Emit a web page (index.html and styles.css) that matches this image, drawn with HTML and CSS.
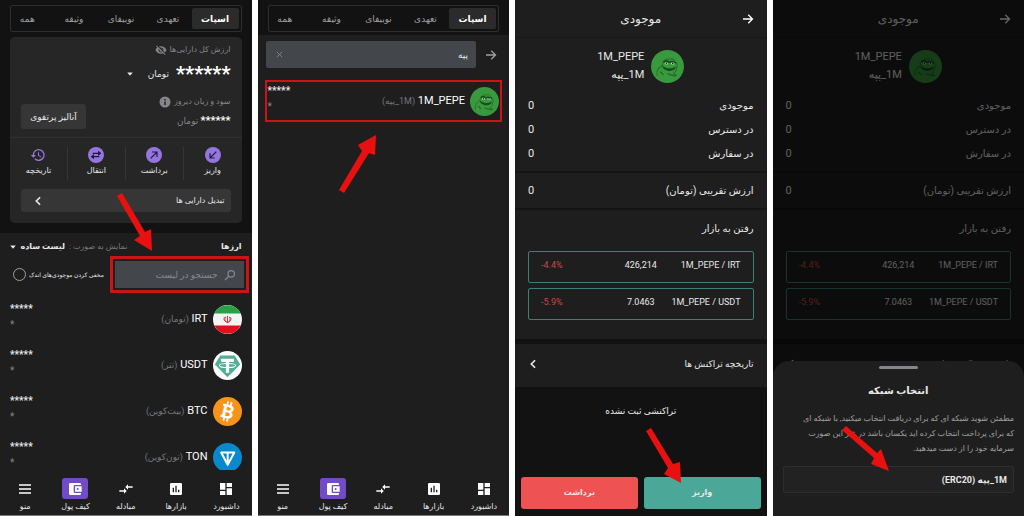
FILE: index.html
```html
<!DOCTYPE html>
<html lang="fa" dir="rtl">
<head>
  <meta charset="UTF-8" />
  <meta name="viewport" content="width=device-width, initial-scale=1.0" />
  <title>آموزش واریز پپه</title>
  <link rel="stylesheet" href="styles.css">
</head>

<body>
  <svg class="sprite" aria-hidden="true">
    <symbol id="i-dashboard" viewBox="0 0 24 24"><path d="M13 3h8v6h-8zM13 11h8v10h-8zM3 3h8v10H3zM3 15h8v6H3z" /></symbol>
    <symbol id="i-chart" viewBox="0 0 24 24"><path fill-rule="evenodd" d="M5 3h14a2 2 0 0 1 2 2v14a2 2 0 0 1-2 2H5a2 2 0 0 1-2-2V5a2 2 0 0 1 2-2zM7 10v7h2v-7zM11 7v10h2V7zM15 13v4h2v-4z" /></symbol>
    <symbol id="i-swap" viewBox="0 0 24 24"><path d="M9 14H2v2h7v3l4-4-4-4zM15 13v-3h7V8h-7V5l-4 4z" /></symbol>
    <symbol id="i-wallet" viewBox="0 0 24 24"><path d="M21 18v1a2 2 0 0 1-2 2H5a2 2 0 0 1-2-2V5a2 2 0 0 1 2-2h14a2 2 0 0 1 2 2v1h-9a2 2 0 0 0-2 2v8a2 2 0 0 0 2 2zm-9-2h10V8H12zm4-2.500a1.500 1.500 0 1 1 0-3 1.500 1.500 0 0 1 0 3z" /></symbol>
    <symbol id="i-menu" viewBox="0 0 24 24"><path d="M3 5h18v2H3zM3 11h18v2H3zM3 17h18v2H3z" /></symbol>
    <symbol id="i-eye-off" viewBox="0 0 24 24"><path d="M12 7c2.760 0 5 2.240 5 5 0 .650-.130 1.260-.360 1.830l2.920 2.920c1.510-1.260 2.700-2.890 3.430-4.750-1.730-4.390-6-7.500-11-7.500-1.400 0-2.740.250-3.980.700l2.160 2.160C10.740 7.130 11.350 7 12 7zM2 4.270l2.280 2.280.460.460C3.080 8.300 1.780 10.020 1 12c1.730 4.390 6 7.500 11 7.500 1.550 0 3.030-.300 4.380-.840L19.730 22 21 20.730 3.270 3zM7.530 9.800l1.550 1.550c-.050.210-.080.430-.080.650 0 1.660 1.340 3 3 3 .220 0 .440-.030.650-.080l1.550 1.550c-.670.330-1.410.530-2.200.530-2.760 0-5-2.240-5-5 0-.790.200-1.530.530-2.200zm4.310-.780l3.150 3.150.020-.160c0-1.660-1.340-3-3-3z" /></symbol>
    <symbol id="i-info" viewBox="0 0 24 24"><path fill-rule="evenodd" d="M12 1a11 11 0 1 0 0 22 11 11 0 0 0 0-22zm-1.500 5h3v3h-3zm0 5h3v7h-3z" /></symbol>
    <symbol id="i-deposit" viewBox="0 0 24 24"><circle cx="12" cy="12" r="12" fill="#9575de" /><path d="M17 7L7.500 16.500M7.500 9.500v7h7" fill="none" stroke="#221a3c" stroke-width="1.800" /></symbol>
    <symbol id="i-withdraw" viewBox="0 0 24 24"><circle cx="12" cy="12" r="12" fill="#9575de" /><path d="M7 17l9.500-9.500M9 7.500h7.500V15" fill="none" stroke="#221a3c" stroke-width="1.800" /></symbol>
    <symbol id="i-transfer" viewBox="0 0 24 24"><circle cx="12" cy="12" r="12" fill="#9575de" /><path d="M7 8.500h8V5.500l5 4-5 4v-3H7zM17 13.500H9v-3l-5 4 5 4v-3h8z" fill="#221a3c" /></symbol>
    <symbol id="i-history" viewBox="0 0 24 24"><path d="M13 3a9 9 0 0 0-9 9H1l4 4 4-4H6a7 7 0 1 1 2.060 4.940l-1.420 1.420A9 9 0 1 0 13 3zm-1 5v5l4.300 2.500.700-1.200-3.500-2.100V8z" fill="#9575de" /></symbol>
    <symbol id="i-search" viewBox="0 0 24 24"><path d="M14.500 3a6.500 6.500 0 1 1 0 13 6.500 6.500 0 0 1 0-13zM9.500 14.500L2 22" fill="none" stroke="currentColor" stroke-width="2.500" /></symbol>
    <symbol id="i-arrow" viewBox="0 0 24 24"><path d="M2 12h19M12.500 3.500L21 12l-8.500 8.500" fill="none" stroke="currentColor" stroke-width="2.600" /></symbol>
    <symbol id="i-chevron" viewBox="0 0 24 24"><path d="M17 3l-9 9 9 9" fill="none" stroke="currentColor" stroke-width="4" /></symbol>
    <symbol id="i-caret" viewBox="0 0 24 24"><path d="M1 6h22L12 19z" /></symbol>
    <symbol id="i-close" viewBox="0 0 24 24"><path d="M3 3l18 18M21 3L3 21" fill="none" stroke="currentColor" stroke-width="3" /></symbol>

    <symbol id="c-pepe" viewBox="0 0 32 32">
      <circle cx="16" cy="16" r="16" fill="#389a3c" />
      <path d="M6 25c-1-5 1-8 5-10 0-4 3-7 6-6 2-1 5-1 6 2 2 1 3 4 2 6 0 3-2 5-3 6l2 3" fill="none" stroke="#23702a" stroke-width="1" />
      <path d="M11 15c3 3 8 4 13 1 0 3-4 5-8 4-3-1-5-2-5-5z" fill="#174d20" />
      <path d="M12 12c2-2 4-2 5 0 2-1 5-1 7 1" fill="none" stroke="#174d20" stroke-width="1.600" />
      <ellipse cx="15" cy="13" rx="1.800" ry="1" fill="#d9ead2" /><ellipse cx="21" cy="13" rx="1.800" ry="1" fill="#d9ead2" />
      <circle cx="15" cy="13" r=".8" fill="#10240f" /><circle cx="21" cy="13" r=".8" fill="#10240f" />
      <path d="M16 23l6 2 3-1M9 21l3 3" fill="none" stroke="#23702a" stroke-width="1.500" />
    </symbol>
    <symbol id="c-irt" viewBox="0 0 32 32">
      <circle cx="16" cy="16" r="16" fill="#f4f4f4" />
      <path d="M1.500 9.500a16 16 0 0 1 29 0z" fill="#27a048" />
      <path d="M1.500 22.500a16 16 0 0 0 29 0z" fill="#e0101c" />
      <path d="M16 12v8M14 13c-1.500 2-1 5 1 6M18 13c1.500 2 1 5-1 6M12.700 13.500c-1.500 2.500 0 5 3.300 5.500M19.300 13.500c1.500 2.500 0 5-3.300 5.500" fill="none" stroke="#d8232e" stroke-width="1" />
    </symbol>
    <symbol id="c-usdt" viewBox="0 0 32 32">
      <circle cx="16" cy="16" r="16" fill="#fff" />
      <path d="M8 5h16l6 10-14 14L2 15z" fill="#50af95" />
      <path d="M9 8.500h14v3.500h-5.200v12h-3.600V12H9z" fill="#fff" />
      <ellipse cx="16" cy="16" rx="9" ry="2.200" fill="none" stroke="#fff" stroke-width="1.200" />
    </symbol>
    <symbol id="c-ton" viewBox="0 0 32 32">
      <circle cx="16" cy="16" r="16" fill="#0a88cc" />
      <path d="M9 10.500h14.500L16.200 24zM16.200 10.500V23" fill="none" stroke="#fff" stroke-width="2.200" stroke-linejoin="round" />
    </symbol>
  </svg>

  <main class="steps">

    <!-- کیف پول -->
    <section class="screen">
      <div class="tabs-bar">
        <div class="tabs">
          <button class="tab active">اسپات</button>
          <button class="tab">تعهدی</button>
          <button class="tab">نوبیفای</button>
          <button class="tab">وثیقه</button>
          <button class="tab">همه</button>
        </div>
      </div>

      <div class="summary-wrap">
        <div class="summary">
          <div class="summary-label">ارزش کل دارایی‌ها <svg class="icon-md"><use href="#i-eye-off" /></svg></div>
          <div class="total">
            <span class="total-stars">******</span>
            <div class="picker currency">
              <select aria-label="واحد"><option>تومان</option></select>
              <svg class="caret"><use href="#i-caret" /></svg>
            </div>
          </div>
          <div class="profit">
            <div>
              <div class="summary-label">سود و زیان دیروز <svg class="icon-md"><use href="#i-info" /></svg></div>
              <div class="profit-value"><span class="profit-stars">******</span> تومان</div>
            </div>
            <button class="btn-dark">آنالیز پرتفوی</button>
          </div>
          <div class="actions">
            <button class="action"><svg><use href="#i-deposit" /></svg>واریز</button>
            <button class="action"><svg><use href="#i-withdraw" /></svg>برداشت</button>
            <button class="action"><svg><use href="#i-transfer" /></svg>انتقال</button>
            <button class="action"><svg><use href="#i-history" /></svg>تاریخچه</button>
          </div>
          <button class="convert">تبدیل دارایی ها <svg class="chevron"><use href="#i-chevron" /></svg></button>
        </div>
      </div>

      <div class="coins">
        <div class="coins-head">
          <h2>ارزها</h2>
          <div class="picker view">
            <label for="view">نمایش به صورت :</label>
            <select id="view"><option>لیست ساده</option></select>
            <svg class="caret"><use href="#i-caret" /></svg>
          </div>
        </div>
        <div class="filter">
          <div class="search highlight">
            <svg class="icon-md"><use href="#i-search" /></svg>
            <input type="text" placeholder="جستجو در لیست" aria-label="جستجو در لیست">
          </div>
          <label class="hide-small">مخفی کردن موجودی‌های اندک <input type="checkbox"></label>
        </div>
        <div class="coin">
          <svg class="coin-icon"><use href="#c-irt" /></svg>
          <div class="coin-name">IRT <span>(تومان)</span></div>
          <div class="coin-value">*****<small>*</small></div>
        </div>
        <div class="coin">
          <svg class="coin-icon"><use href="#c-usdt" /></svg>
          <div class="coin-name">USDT <span>(تتر)</span></div>
          <div class="coin-value">*****<small>*</small></div>
        </div>
        <div class="coin">
          <svg class="coin-icon" viewBox="0 0 32 32">
            <circle cx="16" cy="16" r="16" fill="#f7931a" />
            <g transform="rotate(14 16 16)">
              <path d="M13 5h2v4h-2zM17 5h2v4h-2zM13 23h2v4h-2zM17 23h2v4h-2zM9.500 8.500h3v2.500h-3zM9.500 21h3v2.500h-3z" fill="#fff" />
              <text class="btc-letter" x="16.500" y="23.500" text-anchor="middle">B</text>
            </g>
          </svg>
          <div class="coin-name">BTC <span>(بیت‌کوین)</span></div>
          <div class="coin-value">*****<small>*</small></div>
        </div>
        <div class="coin">
          <svg class="coin-icon"><use href="#c-ton" /></svg>
          <div class="coin-name">TON <span>(تون‌کوین)</span></div>
          <div class="coin-value">*****<small>*</small></div>
        </div>
      </div>

      <nav class="bottom-nav">
        <a href="#"><span><svg><use href="#i-dashboard" /></svg></span>داشبورد</a>
        <a href="#"><span><svg><use href="#i-chart" /></svg></span>بازارها</a>
        <a href="#"><span><svg><use href="#i-swap" /></svg></span>مبادله</a>
        <a href="#" class="current"><span><svg><use href="#i-wallet" /></svg></span>کیف پول</a>
        <a href="#"><span><svg><use href="#i-menu" /></svg></span>منو</a>
      </nav>

      <svg class="pointer pointer-search" viewBox="0 0 36 60"><path d="M0 3L5 0 28 39 34 36 35 58 17 47 23 43z" /></svg>
    </section>

    <!-- جستجوی ارز -->
    <section class="screen">
      <div class="tabs-bar">
        <div class="tabs">
          <button class="tab active">اسپات</button>
          <button class="tab">تعهدی</button>
          <button class="tab">نوبیفای</button>
          <button class="tab">وثیقه</button>
          <button class="tab">همه</button>
        </div>
      </div>
      <div class="search-row">
        <button class="back" aria-label="بازگشت"><svg><use href="#i-arrow" /></svg></button>
        <div class="search">
          <input type="text" value="پپه" aria-label="جستجو">
          <button class="clear" aria-label="پاک کردن"><svg><use href="#i-close" /></svg></button>
        </div>
      </div>
      <div class="results">
        <div class="coin highlight-row">
          <svg class="coin-icon"><use href="#c-pepe" /></svg>
          <div class="coin-name">1M_PEPE <span>(1M_پپه)</span></div>
          <div class="coin-value">*****<small>*</small></div>
        </div>
      </div>
      <nav class="bottom-nav">
        <a href="#"><span><svg><use href="#i-dashboard" /></svg></span>داشبورد</a>
        <a href="#"><span><svg><use href="#i-chart" /></svg></span>بازارها</a>
        <a href="#"><span><svg><use href="#i-swap" /></svg></span>مبادله</a>
        <a href="#" class="current"><span><svg><use href="#i-wallet" /></svg></span>کیف پول</a>
        <a href="#"><span><svg><use href="#i-menu" /></svg></span>منو</a>
      </nav>
      <svg class="pointer pointer-result" viewBox="0 0 40 60"><path d="M1 56L24 17 20 11 38 1 37 21 31 19 6 59z" /></svg>
    </section>

    <!-- موجودی -->
    <section class="screen balance">
      <header class="balance-head">
        <button class="back" aria-label="بازگشت"><svg><use href="#i-arrow" /></svg></button>
        <h1>موجودی</h1>
      </header>
      <div class="block">
        <div class="token">
          <svg><use href="#c-pepe" /></svg>
          <div><p dir="ltr">1M_PEPE</p><p>1M_پپه</p></div>
        </div>
        <div class="row"><span>موجودی</span><span>0</span></div>
        <div class="row"><span>در دسترس</span><span>0</span></div>
        <div class="row"><span>در سفارش</span><span>0</span></div>
      </div>
      <div class="block approx">
        <div class="row"><span>ارزش تقریبی (تومان)</span><span>0</span></div>
      </div>
      <div class="block markets">
        <h2>رفتن به بازار</h2>
        <a href="#" class="market"><span dir="ltr">1M_PEPE / IRT</span><span>426,214</span><span class="down" dir="ltr">-4.4%</span></a>
        <a href="#" class="market"><span dir="ltr">1M_PEPE / USDT</span><span>7.0463</span><span class="down" dir="ltr">-5.9%</span></a>
      </div>
      <a href="#" class="history">تاریخچه تراکنش ها <svg class="chevron"><use href="#i-chevron" /></svg></a>
      <p class="empty">تراکنشی ثبت نشده</p>
      <div class="balance-actions">
        <button class="btn-deposit">واریز</button>
        <button class="btn-withdraw">برداشت</button>
      </div>
      <svg class="pointer pointer-deposit" viewBox="0 0 38 58"><path d="M1 3L6 0 28 36 35 34 36 55 19 46 23 40z" /></svg>
    </section>

    <!-- انتخاب شبکه -->
    <section class="screen balance">
      <header class="balance-head">
        <button class="back" aria-label="بازگشت"><svg><use href="#i-arrow" /></svg></button>
        <h1>موجودی</h1>
      </header>
      <div class="block">
        <div class="token">
          <svg><use href="#c-pepe" /></svg>
          <div><p dir="ltr">1M_PEPE</p><p>1M_پپه</p></div>
        </div>
        <div class="row"><span>موجودی</span><span>0</span></div>
        <div class="row"><span>در دسترس</span><span>0</span></div>
        <div class="row"><span>در سفارش</span><span>0</span></div>
      </div>
      <div class="block approx">
        <div class="row"><span>ارزش تقریبی (تومان)</span><span>0</span></div>
      </div>
      <div class="block markets">
        <h2>رفتن به بازار</h2>
        <a href="#" class="market"><span dir="ltr">1M_PEPE / IRT</span><span>426,214</span><span class="down" dir="ltr">-4.4%</span></a>
        <a href="#" class="market"><span dir="ltr">1M_PEPE / USDT</span><span>7.0463</span><span class="down" dir="ltr">-5.9%</span></a>
      </div>
      <a href="#" class="history">تاریخچه تراکنش ها <svg class="chevron"><use href="#i-chevron" /></svg></a>
      <div class="overlay"></div>
      <div class="sheet" role="dialog" aria-labelledby="sheet-title">
        <div class="handle"></div>
        <h2 id="sheet-title">انتخاب شبکه</h2>
        <p>مطمئن شوید شبکه ای که برای دریافت انتخاب میکنید, با شبکه ای<br>که برای پرداخت انتخاب کرده اید یکسان باشد در غیر این صورت<br>سرمایه خود را از دست میدهید.</p>
        <button class="network">1M_پپه (ERC20)</button>
      </div>
      <svg class="pointer pointer-network" viewBox="0 0 50 46"><path d="M1 4L5 0 36 27 40 23 48 45 30 38 33 32z" /></svg>
    </section>

  </main>
</body>
</html>
```

FILE: styles.css
```css
* {
  box-sizing: border-box;
}

body {
  margin: 0;
  background: #fff;
  color: #e8e8e8;
  font-family: Roboto, "DejaVu Sans", sans-serif;
  font-size: 9px;
  line-height: 16px;
}

h1, h2, p {
  margin: 0;
}

a {
  color: inherit;
  text-decoration: none;
}

button, input, select {
  font: inherit;
  color: inherit;
  border: none;
  background: none;
  padding: 0;
  margin: 0;
}

svg {
  display: block;
  flex: none;
  fill: currentColor;
}

.sprite {
  position: absolute;
  width: 0;
  height: 0;
}

.btc-letter {
  font: bold 21px Roboto, sans-serif;
  fill: #fff;
}

.steps {
  direction: ltr;
  display: grid;
  grid-template-columns: repeat(4, 1fr);
  gap: 6px;
  height: 100vh;
}

.screen {
  direction: rtl;
  position: relative;
  display: flex;
  flex-direction: column;
  min-width: 0;
  overflow: hidden;
  background: #1e1e1e;
}

/* tabs */
.tabs-bar {
  background: #121212;
  padding: 5px 10px 3px;
}

.tabs {
  display: flex;
  height: 27px;
  padding: 2px;
  border: 1px solid #2e2e2e;
  border-radius: 2px;
}

.tab {
  flex: 0 0 47px;
  color: #a0a0a0;
}

.tab:last-child {
  flex: 1;
  padding-right: 9px;
}

.tab.active {
  background: #2b2b2b;
  border-radius: 2px;
  color: #fff;
  font-weight: bold;
}

/* summary card */
.summary-wrap {
  background: #121212;
  padding: 2px 10px 10px;
}

.summary {
  background: #262626;
  border-radius: 5px;
  padding: 5px 11px 11px;
}

.summary-label {
  display: flex;
  align-items: center;
  gap: 3px;
  font-size: 8px;
  color: #85858a;
}

.icon-md {
  width: 12px;
  height: 12px;
}

.total {
  display: flex;
  align-items: center;
  gap: 7px;
  height: 32px;
}

.total-stars {
  font-size: 20px;
  font-weight: bold;
  line-height: 32px;
  color: #fff;
}

.picker {
  display: flex;
  align-items: center;
  gap: 4px;
}

.picker select {
  appearance: none;
}

.currency {
  gap: 14px;
}

.caret {
  width: 6px;
  height: 6px;
}

.profit {
  display: flex;
  justify-content: space-between;
  align-items: flex-end;
  padding-top: 4px;
}

.profit-value {
  padding-top: 3px;
  color: #85858a;
}

.profit-stars {
  font-size: 11px;
  font-weight: bold;
  color: #fff;
}

.btn-dark {
  width: 65px;
  height: 25px;
  border-radius: 3px;
  background: #363636;
}

.actions {
  display: grid;
  grid-template-columns: repeat(4, 1fr);
  margin: 8px -11px 0;
  padding: 9px 0;
  border-top: 1px solid #303030;
}

.action {
  display: flex;
  flex-direction: column;
  align-items: center;
  height: 33px;
  font-size: 8px;
}

.action + .action {
  border-right: 1px solid #363636;
}

.action svg {
  width: 16px;
  height: 16px;
}

.convert {
  display: flex;
  justify-content: space-between;
  align-items: center;
  width: 100%;
  height: 23px;
  padding: 0 6px 0 12px;
  border-radius: 3px;
  background: #363636;
  font-size: 8px;
}

.chevron {
  width: 10px;
  height: 10px;
}

/* coin list */
.coins {
  flex: 1;
  min-height: 0;
  overflow: hidden;
  padding: 6px 10px 0;
}

.coins-head {
  display: flex;
  justify-content: space-between;
  font-size: 8px;
}

.coins-head h2 {
  font-size: 8px;
  line-height: 16px;
}

.view label {
  color: #77777b;
}

.view select {
  font-weight: bold;
}

.filter {
  display: flex;
  align-items: center;
  justify-content: space-between;
  margin: 6px -2px 8px 3px;
}

.search {
  display: flex;
  align-items: center;
  width: 129px;
  height: 27px;
  padding: 0 8px;
  gap: 6px;
  border-radius: 2px;
  background: #43464b;
}

.search input {
  flex: 1;
  min-width: 0;
  outline: none;
}

.filter .search {
  color: #85888e;
}

.search input::placeholder {
  color: #85888e;
  opacity: 1;
}

.search.highlight {
  border-radius: 0;
  outline: 3px solid #cc1417;
  outline-offset: 2px;
}

.hide-small {
  display: flex;
  align-items: center;
  gap: 3px;
  font-size: 6px;
  white-space: nowrap;
}

.hide-small input {
  appearance: none;
  width: 13px;
  height: 13px;
  border: 1px solid #a0a0a0;
  border-radius: 50%;
}

.coin {
  display: flex;
  align-items: center;
  gap: 5px;
  height: 46px;
}

.coin-icon {
  width: 29px;
  height: 29px;
}

.coin-name {
  font-size: 11px;
  color: #fff;
}

.coin-name span {
  font-size: 9px;
  color: #77777b;
}

.coin-value {
  margin-right: auto;
  padding-bottom: 4px;
  font-size: 10px;
  font-weight: bold;
  text-align: left;
  line-height: 16px;
}

.coin-value small {
  display: block;
  font-size: 10px;
  font-weight: normal;
  color: #85858a;
}

/* bottom nav */
.bottom-nav {
  display: grid;
  grid-template-columns: repeat(5, 1fr);
  height: 46px;
  padding: 8px 0 0;
  border-bottom: 1px solid #77777b;
}

.bottom-nav a {
  display: flex;
  flex-direction: column;
  align-items: center;
  font-size: 8px;
}

.bottom-nav span {
  display: flex;
  align-items: center;
  justify-content: center;
  width: 26px;
  height: 21px;
  border-radius: 3px;
  color: #fff;
}

.bottom-nav .current span {
  background: #724bc6;
}

.bottom-nav svg {
  width: 16px;
  height: 16px;
}

/* search results */
.search-row {
  display: flex;
  align-items: center;
  padding: 6px 12px 12px 8px;
  gap: 9px;
}

.back {
  color: #a0a0a0;
}

.back svg {
  width: 12px;
  height: 12px;
}

.search-row .search {
  flex: 1;
}

.clear {
  color: #85888e;
  padding: 0 2px;
}

.clear svg {
  width: 7px;
  height: 7px;
}

.results {
  flex: 1;
  padding: 0 7px;
}

.highlight-row {
  height: 42px;
  padding: 0 1px;
  border: 2px solid #cc1417;
}

/* balance page */
.balance-head {
  display: grid;
  grid-template-columns: 12px 1fr 12px;
  align-items: center;
  height: 38px;
  padding: 0 13px;
  border-bottom: 1px solid #181818;
}

.balance-head .back {
  color: #fff;
}

.balance h1 {
  font-size: 12px;
  font-weight: normal;
  text-align: center;
}

.block {
  padding: 0 13px 5px;
  border-bottom: 2px solid #151515;
}

.token {
  display: flex;
  align-items: center;
  justify-content: center;
  gap: 7px;
  height: 56px;
}

.token svg {
  width: 33px;
  height: 33px;
}

.token p {
  font-size: 11px;
  line-height: 18px;
}

.row {
  display: flex;
  align-items: center;
  justify-content: space-between;
  height: 24px;
  font-size: 10px;
}

.row span:last-child {
  font-size: 11px;
}

.approx {
  padding-top: 6px;
}

.markets {
  padding-top: 11px;
  padding-bottom: 19px;
  border-bottom: 5px solid #121212;
}

.markets h2 {
  margin-bottom: 14px;
  font-size: 10px;
  font-weight: normal;
}

.market {
  display: grid;
  grid-template-columns: 1fr 40px 1fr;
  height: 32px;
  padding: 4px 12px;
  border: 1px solid #3a8076;
  border-radius: 2px;
  text-align: center;
  line-height: 18px;
}

.market + .market {
  margin-top: 5px;
}

.market span:first-child {
  text-align: right;
}

.market .down {
  text-align: left;
  color: #c94a4a;
}

.history {
  display: flex;
  align-items: center;
  justify-content: space-between;
  height: 43px;
  padding: 0 13px 3px;
}

.empty {
  flex: 1;
  padding-top: 16px;
  background: #121212;
  text-align: center;
}

.balance-actions {
  display: grid;
  grid-template-columns: 1fr 1fr;
  gap: 6px;
  padding: 0 6px 7px;
  background: #121212;
}

.balance-actions button {
  height: 32px;
  border-radius: 3px;
  font-size: 8px;
  font-weight: bold;
}

.btn-deposit {
  background: #4ba899;
}

.btn-withdraw {
  background: #ee5253;
}

/* network sheet */
.overlay {
  position: absolute;
  inset: 0;
  background: rgba(0, 0, 0, 0.6);
}

.sheet {
  position: absolute;
  bottom: 0;
  left: 0;
  right: 0;
  padding: 5px 10px 23px;
  border-radius: 16px 16px 0 0;
  background: #1e1e1e;
}

.handle {
  width: 39px;
  height: 3px;
  margin: 0 auto 14px;
  border-radius: 2px;
  background: #85858a;
}

.sheet h2 {
  font-size: 10px;
  text-align: center;
}

.sheet p {
  margin: 12px 0 10px;
  color: #a0a0a0;
  font-size: 8px;
  line-height: 15px;
  white-space: nowrap;
}

.network {
  display: block;
  width: 100%;
  height: 27px;
  padding: 0 6px;
  border: 1px solid #2e2e2e;
  border-radius: 2px;
  background: #222;
  text-align: right;
  font-weight: bold;
}

/* red arrows over the screens */
.pointer {
  position: absolute;
  fill: #e8110f;
}

.pointer-search {
  left: 117px;
  top: 193px;
  width: 36px;
  height: 60px;
}

.pointer-result {
  left: 80px;
  top: 134px;
  width: 40px;
  height: 60px;
}

.pointer-deposit {
  left: 130px;
  top: 428px;
  width: 38px;
  height: 58px;
}

.pointer-network {
  left: 68px;
  top: 426px;
  width: 50px;
  height: 46px;
}
```
